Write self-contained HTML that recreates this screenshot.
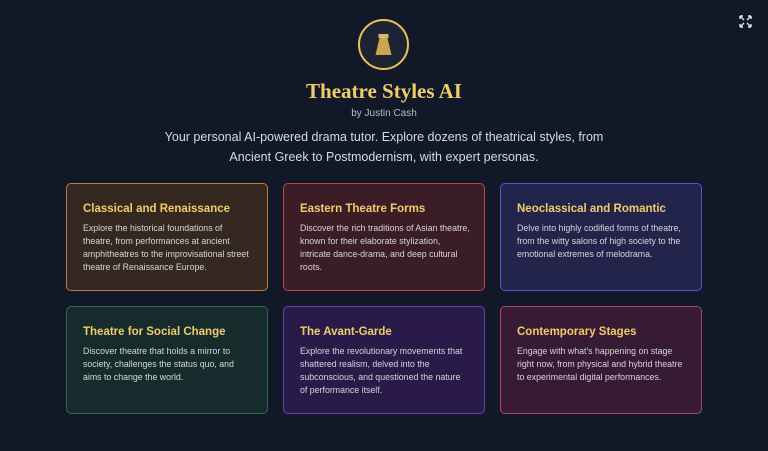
<!DOCTYPE html><html><head><style>
body{margin:0;width:768px;height:451px;background:#111827;font-family:"Liberation Sans",sans-serif;position:relative;overflow:hidden}
.logo{position:absolute;left:358px;top:19px;width:51px;height:51px;border:2.5px solid #e8c35a;border-radius:50%;background:#1c2433;box-sizing:border-box}
h1{position:absolute;top:79px;left:0;width:768px;text-align:center;margin:0;font-family:"Liberation Serif",serif;font-size:21px;color:#f0cd6a;font-weight:bold;letter-spacing:0}
.by{position:absolute;top:108px;width:768px;text-align:center;font-size:10px;color:#b8bcc6}
.tag{position:absolute;top:127px;left:150px;width:468px;text-align:center;font-size:12.5px;line-height:20px;color:#d8dbe2}
.c{position:absolute;width:202px;height:108px;border:1.5px solid;border-radius:5px;box-sizing:border-box;padding:19px 0 0 16px}
.c h2{margin:0 0 7px;font-size:11.5px;color:#f0cd6a}
.c p{margin:0;font-size:8.8px;line-height:13px;color:#d6d6da;width:170px}
</style></head><body>
<div class="logo"><svg width="51" height="51" viewBox="0 0 51 51" style="position:absolute;left:-2.5px;top:-2.5px"><rect x="20.5" y="15" width="10" height="4" fill="#d8b860"/><path d="M21.5 19h8l4 17h-16z" fill="#c9a64e"/></svg></div>
<h1>Theatre Styles AI</h1>
<div class="by">by Justin Cash</div>
<div class="tag">Your personal AI-powered drama tutor. Explore dozens of theatrical styles, from Ancient Greek to Postmodernism, with expert personas.</div>
<svg style="position:absolute;left:739px;top:15px" width="13" height="13" viewBox="0 0 13 13" fill="none" stroke="#dfe3ea" stroke-width="1.4"><path d="M1 1l4 4M1 1v3M1 1h3M12 1l-4 4M12 1v3M12 1h-3M1 12l4-4M1 12v-3M1 12h3M12 12l-4-4M12 12v-3M12 12h-3"/></svg>
<div class="c" style="left:66px;top:183px;background:#352821;border-color:#c07a3e"><h2>Classical and Renaissance</h2><p>Explore the historical foundations of theatre, from performances at ancient amphitheatres to the improvisational street theatre of Renaissance Europe.</p></div>
<div class="c" style="left:283px;top:183px;background:#3b1e25;border-color:#c2424a"><h2>Eastern Theatre Forms</h2><p>Discover the rich traditions of Asian theatre, known for their elaborate stylization, intricate dance-drama, and deep cultural roots.</p></div>
<div class="c" style="left:500px;top:183px;background:#23244c;border-color:#5558cc"><h2>Neoclassical and Romantic</h2><p>Delve into highly codified forms of theatre, from the witty salons of high society to the emotional extremes of melodrama.</p></div>
<div class="c" style="left:66px;top:306px;background:#162c2c;border-color:#2e6a52"><h2>Theatre for Social Change</h2><p>Discover theatre that holds a mirror to society, challenges the status quo, and aims to change the world.</p></div>
<div class="c" style="left:283px;top:306px;background:#291a4a;border-color:#6b3db0"><h2>The Avant-Garde</h2><p>Explore the revolutionary movements that shattered realism, delved into the subconscious, and questioned the nature of performance itself.</p></div>
<div class="c" style="left:500px;top:306px;background:#371a33;border-color:#b2416e"><h2>Contemporary Stages</h2><p>Engage with what's happening on stage right now, from physical and hybrid theatre to experimental digital performances.</p></div>
</body></html>
